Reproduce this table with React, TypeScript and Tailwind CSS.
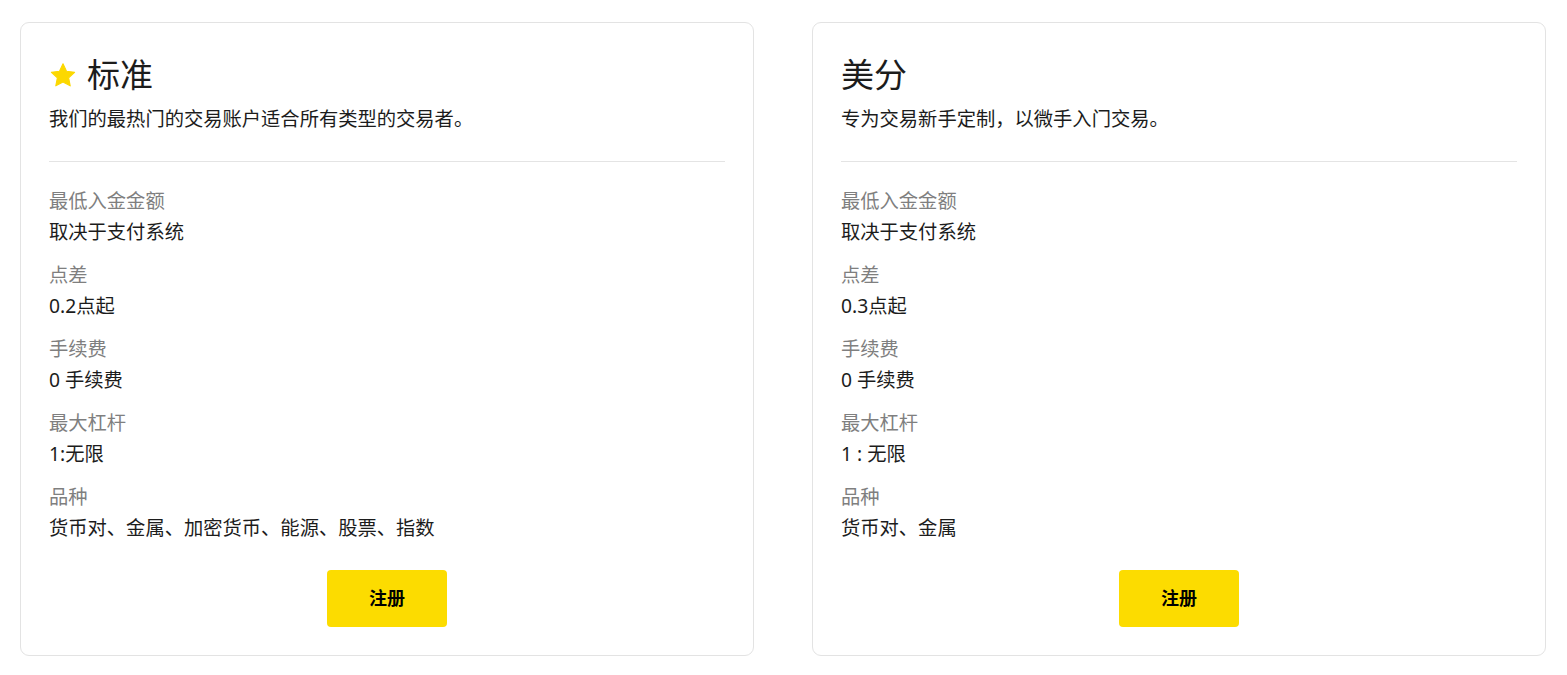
import React from 'react';

interface Spec {
  label: string;
  value: string;
}

interface AccountCardProps {
  title: string;
  description: string;
  featured?: boolean;
  specs: Spec[];
}

const Star = () => (
  <svg width="28" height="27" viewBox="0 0 24 24" className="shrink-0">
    <path
      d="M12 1.6l3.1 6.6 7.2.9-5.3 5 1.4 7.1L12 17.7l-6.4 3.5 1.4-7.1-5.3-5 7.2-.9z"
      fill="#fcd800"
      stroke="#fcd800"
      strokeWidth="1"
      strokeLinejoin="round"
    />
  </svg>
);

const AccountCard = ({ title, description, featured = false, specs }: AccountCardProps) => {
  return (
    <div className="w-[734px] shrink-0 flex flex-col rounded-[9px] border border-[#e3e3e3] bg-white px-[28px] pt-[28px] pb-[28px]">
      <div className="flex flex-row items-center gap-[10px] h-[48px]">
        {featured && <Star />}
        <div className="text-[33px] leading-[48px] text-[#1c1c1c]">{title}</div>
      </div>
      <div className="mt-[4px] text-[19.3px] leading-[31px] text-[#1c1c1c]">{description}</div>
      <div className="mt-[27px] h-px bg-[#e4e4e4]" />
      <div className="mt-[23px] flex flex-col gap-[12px]">
        {specs.map((s) => (
          <div key={s.label} className="flex flex-col">
            <div className="text-[19.3px] leading-[31px] text-[#7f7f7f]">{s.label}</div>
            <div className="text-[19.3px] leading-[31px] text-[#1c1c1c]">{s.value}</div>
          </div>
        ))}
      </div>
      <div className="mt-[27px] flex justify-center">
        <button className="w-[120px] h-[57px] rounded-[4px] bg-[#fcdc00] text-[18px] font-bold text-black">
          注册
        </button>
      </div>
    </div>
  );
};

export default function App() {
  return (
    <div
      className="min-h-screen w-full bg-white flex flex-row items-start gap-[58px] px-[20px] pt-[22px]"
      style={{ fontFamily: '"Noto Sans", "Noto Sans CJK SC", sans-serif' }}
    >
      <AccountCard
        featured
        title="标准"
        description="我们的最热门的交易账户适合所有类型的交易者。"
        specs={[
          { label: '最低入金金额', value: '取决于支付系统' },
          { label: '点差', value: '0.2点起' },
          { label: '手续费', value: '0 手续费' },
          { label: '最大杠杆', value: '1:无限' },
          { label: '品种', value: '货币对、金属、加密货币、能源、股票、指数' },
        ]}
      />
      <AccountCard
        title="美分"
        description="专为交易新手定制，以微手入门交易。"
        specs={[
          { label: '最低入金金额', value: '取决于支付系统' },
          { label: '点差', value: '0.3点起' },
          { label: '手续费', value: '0 手续费' },
          { label: '最大杠杆', value: '1 : 无限' },
          { label: '品种', value: '货币对、金属' },
        ]}
      />
    </div>
  );
}
